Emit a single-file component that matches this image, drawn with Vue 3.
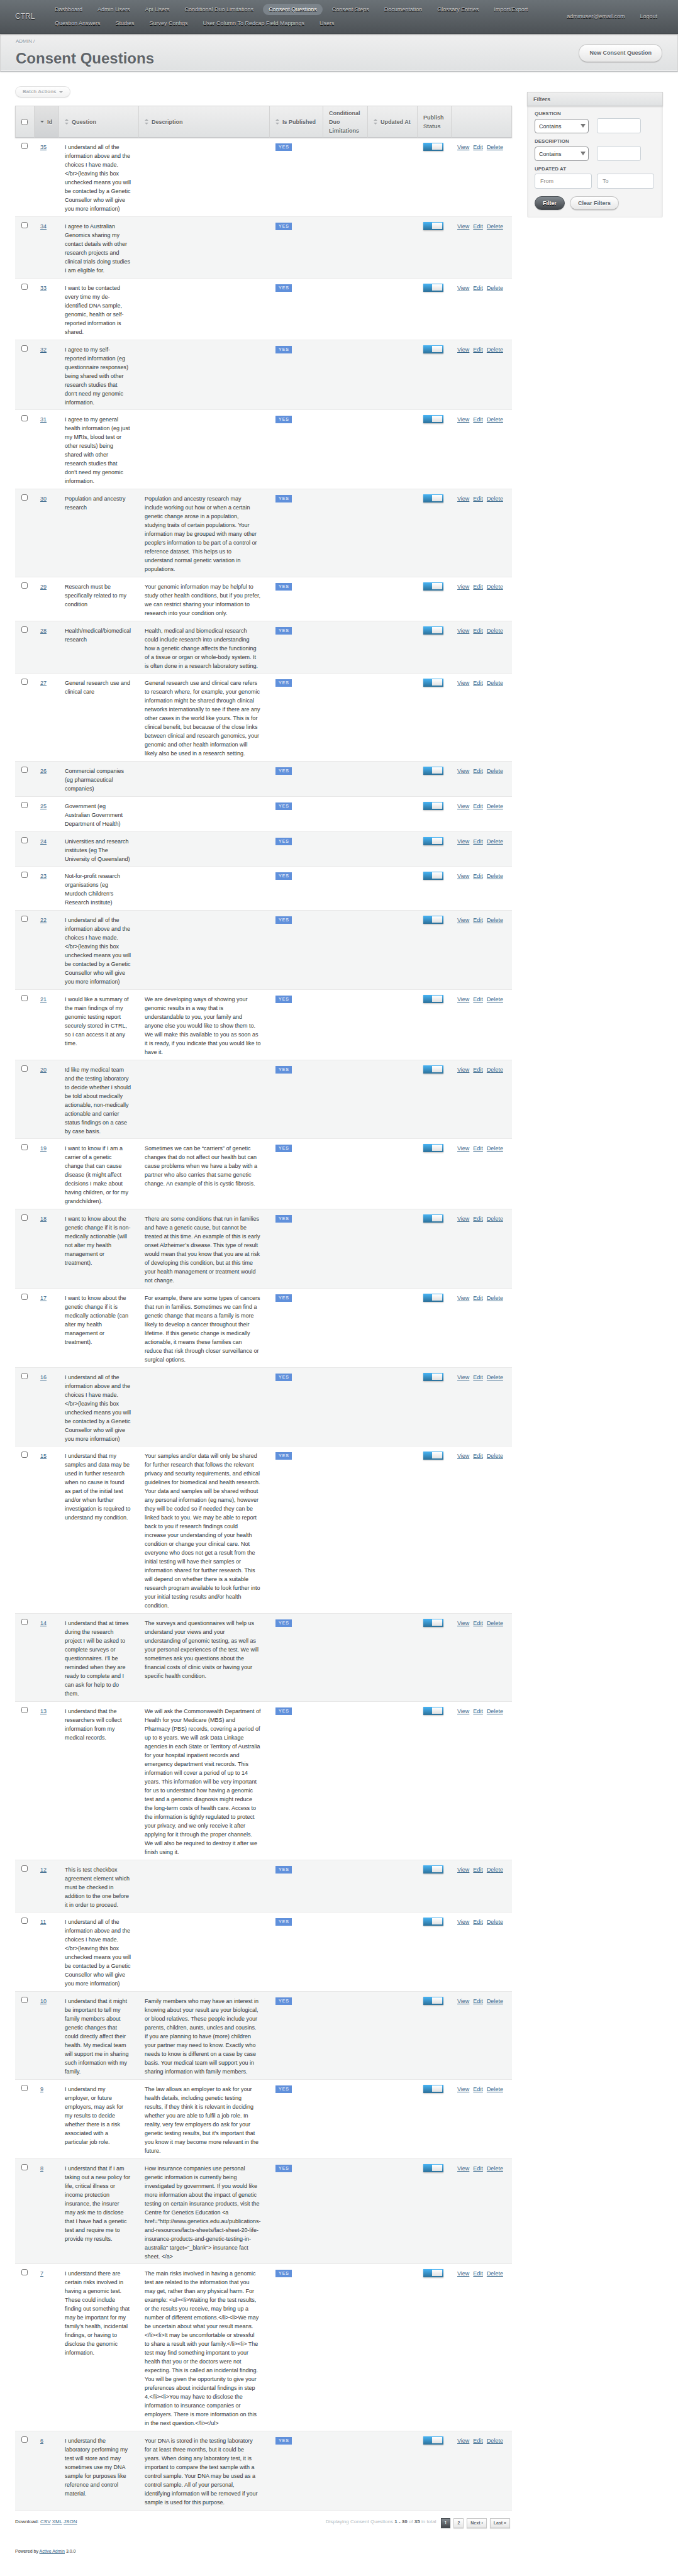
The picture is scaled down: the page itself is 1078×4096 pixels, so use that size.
<script setup>
import { ref } from 'vue'

const primaryLinks = [
  'Dashboard',
  'Admin Users',
  'Api Users',
  'Conditional Duo Limitations',
  'Consent Questions',
  'Consent Steps',
  'Documentation',
  'Glossary Entries',
  'Import/Export',
  'Question Answers',
  'Studies',
  'Survey Configs',
  'User Column To Redcap Field Mappings',
  'Users'
]
const current = 'Consent Questions'

const columns = [
  { key: 'id', label: 'Id', sort: 'desc' },
  { key: 'question', label: 'Question', sort: 'both' },
  { key: 'description', label: 'Description', sort: 'both' },
  { key: 'published', label: 'Is Published', sort: 'both' },
  { key: 'duo', label: 'Conditional Duo Limitations' },
  { key: 'updated', label: 'Updated At', sort: 'both' },
  { key: 'status', label: 'Publish Status' },
  { key: 'actions', label: '' }
]

const allChoices = `I understand all of the
information above and the
choices I have made.
</br>(leaving this box
unchecked means you will
be contacted by a Genetic
Counsellor who will give
you more information)`

const rows = ref(
  [
    { id: 35, question: allChoices },
    {
      id: 34,
      question: `I agree to Australian
Genomics sharing my
contact details with other
research projects and
clinical trials doing studies
I am eligible for.`
    },
    {
      id: 33,
      question: `I want to be contacted
every time my de-
identified DNA sample,
genomic, health or self-
reported information is
shared.`
    },
    {
      id: 32,
      question: `I agree to my self-
reported information (eg
questionnaire responses)
being shared with other
research studies that
don’t need my genomic
information.`
    },
    {
      id: 31,
      question: `I agree to my general
health information (eg just
my MRIs, blood test or
other results) being
shared with other
research studies that
don’t need my genomic
information.`
    },
    {
      id: 30,
      question: `Population and ancestry
research`,
      description: `Population and ancestry research may
include working out how or when a certain
genetic change arose in a population,
studying traits of certain populations. Your
information may be grouped with many other
people’s information to be part of a control or
reference dataset. This helps us to
understand normal genetic variation in
populations.`
    },
    {
      id: 29,
      question: `Research must be
specifically related to my
condition`,
      description: `Your genomic information may be helpful to
study other health conditions, but if you prefer,
we can restrict sharing your information to
research into your condition only.`
    },
    {
      id: 28,
      question: `Health/medical/biomedical
research`,
      description: `Health, medical and biomedical research
could include research into understanding
how a genetic change affects the functioning
of a tissue or organ or whole-body system. It
is often done in a research laboratory setting.`
    },
    {
      id: 27,
      question: `General research use and
clinical care`,
      description: `General research use and clinical care refers
to research where, for example, your genomic
information might be shared through clinical
networks internationally to see if there are any
other cases in the world like yours. This is for
clinical benefit, but because of the close links
between clinical and research genomics, your
genomic and other health information will
likely also be used in a research setting.`
    },
    {
      id: 26,
      question: `Commercial companies
(eg pharmaceutical
companies)`
    },
    {
      id: 25,
      question: `Government (eg
Australian Government
Department of Health)`
    },
    {
      id: 24,
      question: `Universities and research
institutes (eg The
University of Queensland)`
    },
    {
      id: 23,
      question: `Not-for-profit research
organisations (eg
Murdoch Children’s
Research Institute)`
    },
    { id: 22, question: allChoices },
    {
      id: 21,
      question: `I would like a summary of
the main findings of my
genomic testing report
securely stored in CTRL,
so I can access it at any
time.`,
      description: `We are developing ways of showing your
genomic results in a way that is
understandable to you, your family and
anyone else you would like to show them to.
We will make this available to you as soon as
it is ready, if you indicate that you would like to
have it.`
    },
    {
      id: 20,
      question: `Id like my medical team
and the testing laboratory
to decide whether I should
be told about medically
actionable, non-medically
actionable and carrier
status findings on a case
by case basis.`
    },
    {
      id: 19,
      question: `I want to know if I am a
carrier of a genetic
change that can cause
disease (it might affect
decisions I make about
having children, or for my
grandchildren).`,
      description: `Sometimes we can be “carriers” of genetic
changes that do not affect our health but can
cause problems when we have a baby with a
partner who also carries that same genetic
change. An example of this is cystic fibrosis.`
    },
    {
      id: 18,
      question: `I want to know about the
genetic change if it is non-
medically actionable (will
not alter my health
management or
treatment).`,
      description: `There are some conditions that run in families
and have a genetic cause, but cannot be
treated at this time. An example of this is early
onset Alzheimer’s disease. This type of result
would mean that you know that you are at risk
of developing this condition, but at this time
your health management or treatment would
not change.`
    },
    {
      id: 17,
      question: `I want to know about the
genetic change if it is
medically actionable (can
alter my health
management or
treatment).`,
      description: `For example, there are some types of cancers
that run in families. Sometimes we can find a
genetic change that means a family is more
likely to develop a cancer throughout their
lifetime. If this genetic change is medically
actionable, it means these families can
reduce that risk through closer surveillance or
surgical options.`
    },
    { id: 16, question: allChoices },
    {
      id: 15,
      question: `I understand that my
samples and data may be
used in further research
when no cause is found
as part of the initial test
and/or when further
investigation is required to
understand my condition.`,
      description: `Your samples and/or data will only be shared
for further research that follows the relevant
privacy and security requirements, and ethical
guidelines for biomedical and health research.
Your data and samples will be shared without
any personal information (eg name), however
they will be coded so if needed they can be
linked back to you. We may be able to report
back to you if research findings could
increase your understanding of your health
condition or change your clinical care. Not
everyone who does not get a result from the
initial testing will have their samples or
information shared for further research. This
will depend on whether there is a suitable
research program available to look further into
your initial testing results and/or health
condition.`
    },
    {
      id: 14,
      question: `I understand that at times
during the research
project I will be asked to
complete surveys or
questionnaires. I’ll be
reminded when they are
ready to complete and I
can ask for help to do
them.`,
      description: `The surveys and questionnaires will help us
understand your views and your
understanding of genomic testing, as well as
your personal experiences of the test. We will
sometimes ask you questions about the
financial costs of clinic visits or having your
specific health condition.`
    },
    {
      id: 13,
      question: `I understand that the
researchers will collect
information from my
medical records.`,
      description: `We will ask the Commonwealth Department of
Health for your Medicare (MBS) and
Pharmacy (PBS) records, covering a period of
up to 8 years. We will ask Data Linkage
agencies in each State or Territory of Australia
for your hospital inpatient records and
emergency department visit records. This
information will cover a period of up to 14
years. This information will be very important
for us to understand how having a genomic
test and a genomic diagnosis might reduce
the long-term costs of health care. Access to
the information is tightly regulated to protect
your privacy, and we only receive it after
applying for it through the proper channels.
We will also be required to destroy it after we
finish using it.`
    },
    {
      id: 12,
      question: `This is test checkbox
agreement element which
must be checked in
addition to the one before
it in order to proceed.`
    },
    { id: 11, question: allChoices },
    {
      id: 10,
      question: `I understand that it might
be important to tell my
family members about
genetic changes that
could directly affect their
health. My medical team
will support me in sharing
such information with my
family.`,
      description: `Family members who may have an interest in
knowing about your result are your biological,
or blood relatives. These people include your
parents, children, aunts, uncles and cousins.
If you are planning to have (more) children
your partner may need to know. Exactly who
needs to know is different on a case by case
basis. Your medical team will support you in
sharing information with family members.`
    },
    {
      id: 9,
      question: `I understand my
employer, or future
employers, may ask for
my results to decide
whether there is a risk
associated with a
particular job role.`,
      description: `The law allows an employer to ask for your
health details, including genetic testing
results, if they think it is relevant in deciding
whether you are able to fulfil a job role. In
reality, very few employers do ask for your
genetic testing results, but it's important that
you know it may become more relevant in the
future.`
    },
    {
      id: 8,
      question: `I understand that if I am
taking out a new policy for
life, critical illness or
income protection
insurance, the insurer
may ask me to disclose
that I have had a genetic
test and require me to
provide my results.`,
      description: `How insurance companies use personal
genetic information is currently being
investigated by government. If you would like
more information about the impact of genetic
testing on certain insurance products, visit the
Centre for Genetics Education <a
href="http://www.genetics.edu.au/publications-
and-resources/facts-sheets/fact-sheet-20-life-
insurance-products-and-genetic-testing-in-
australia" target="_blank"> insurance fact
sheet. </a>`
    },
    {
      id: 7,
      question: `I understand there are
certain risks involved in
having a genomic test.
These could include
finding out something that
may be important for my
family’s health, incidental
findings, or having to
disclose the genomic
information.`,
      description: `The main risks involved in having a genomic
test are related to the information that you
may get, rather than any physical harm. For
example: <ul><li>Waiting for the test results,
or the results you receive, may bring up a
number of different emotions.</li><li>We may
be uncertain about what your result means.
</li><li>It may be uncomfortable or stressful
to share a result with your family.</li><li> The
test may find something important to your
health that you or the doctors were not
expecting. This is called an incidental finding.
You will be given the opportunity to give your
preferences about incidental findings in step
4.</li><li>You may have to disclose the
information to insurance companies or
employers. There is more information on this
in the next question.</li></ul>`
    },
    {
      id: 6,
      question: `I understand the
laboratory performing my
test will store and may
sometimes use my DNA
sample for purposes like
reference and control
material.`,
      description: `Your DNA is stored in the testing laboratory
for at least three months, but it could be
years. When doing any laboratory test, it is
important to compare the test sample with a
control sample. Your DNA may be used as a
control sample. All of your personal,
identifying information will be removed if your
sample is used for this purpose.`
    }
  ].map((row) => ({ description: '', selected: false, published: true, ...row }))
)

const filters = ref({ question: '', description: '', from: '', to: '' })

function toggleAll(event) {
  rows.value.forEach((row) => {
    row.selected = event.target.checked
  })
}
</script>

<template>
  <div class="page">
    <header class="header">
      <h1 class="site-title">CTRL</h1>
      <nav class="tabs" aria-label="Main">
        <a v-for="link in primaryLinks" :key="link" href="#" :class="{ current: link === current }">{{ link }}</a>
      </nav>
      <nav class="tabs utility" aria-label="Account">
        <a href="#">adminuser@email.com</a>
        <a href="#">Logout</a>
      </nav>
    </header>

    <div class="title-bar">
      <div>
        <div class="breadcrumb"><a href="#">ADMIN</a> <span>/</span></div>
        <h2 class="page-title">Consent Questions</h2>
      </div>
      <button type="button" class="btn btn-new">New Consent Question</button>
    </div>

    <div class="content">
      <main class="main">
        <button type="button" class="btn btn-batch" disabled>
          Batch Actions
          <svg width="6" height="3" viewBox="0 0 6 3" aria-hidden="true"><path d="M0 0h6L3 3z" /></svg>
        </button>

        <table class="index">
          <colgroup>
            <col class="col-select" />
            <col v-for="c in columns" :key="c.key" :class="'col-' + c.key" />
          </colgroup>
          <thead>
            <tr>
              <th><input type="checkbox" class="tick" aria-label="Select all" @change="toggleAll" /></th>
              <th v-for="c in columns" :key="c.key" :class="{ sorted: c.sort === 'desc' }">
                <div class="th-inner">
                  <svg v-if="c.sort === 'both'" class="sort" width="6" height="9" viewBox="0 0 6 9" aria-hidden="true">
                    <path d="M0 3L3 0l3 3zM0 6h6L3 9z" />
                  </svg>
                  <svg v-else-if="c.sort" class="sort down" width="6" height="9" viewBox="0 0 6 9" aria-hidden="true">
                    <path d="M0 3h6L3 6z" />
                  </svg>
                  <span>{{ c.label }}</span>
                </div>
              </th>
            </tr>
          </thead>
          <tbody>
            <tr v-for="row in rows" :key="row.id">
              <td><input v-model="row.selected" type="checkbox" class="tick" :aria-label="'Select ' + row.id" /></td>
              <td><a href="#">{{ row.id }}</a></td>
              <td class="prose">{{ row.question }}</td>
              <td class="prose">{{ row.description }}</td>
              <td><span class="tag">Yes</span></td>
              <td></td>
              <td></td>
              <td><input v-model="row.published" type="checkbox" class="switch" :aria-label="'Publish ' + row.id" /></td>
              <td>
                <div class="actions"><a href="#">View</a><a href="#">Edit</a><a href="#">Delete</a></div>
              </td>
            </tr>
          </tbody>
        </table>

        <div class="index-footer">
          <div class="download">Download: <a href="#">CSV</a> <a href="#">XML</a> <a href="#">JSON</a></div>
          <div class="paging">
            <span class="summary">Displaying Consent Questions <b>1 - 30</b> of <b>35</b> in total</span>
            <nav class="pages" aria-label="Pagination">
              <a href="#" class="active" aria-current="page">1</a>
              <a href="#">2</a>
              <a href="#">Next ›</a>
              <a href="#">Last »</a>
            </nav>
          </div>
        </div>
      </main>

      <aside class="sidebar">
        <h3>Filters</h3>
        <form class="filters" @submit.prevent>
          <div class="field">
            <label for="f-question">QUESTION</label>
            <div class="controls">
              <span class="select">
                <select aria-label="Question condition">
                  <option>Contains</option>
                  <option>Equals</option>
                  <option>Starts with</option>
                  <option>Ends with</option>
                </select>
                <svg width="8" height="6" viewBox="0 0 8 6" aria-hidden="true"><path d="M0 0h8L4 6z" /></svg>
              </span>
              <input id="f-question" v-model="filters.question" type="text" class="short" />
            </div>
          </div>
          <div class="field">
            <label for="f-description">DESCRIPTION</label>
            <div class="controls">
              <span class="select">
                <select aria-label="Description condition">
                  <option>Contains</option>
                  <option>Equals</option>
                  <option>Starts with</option>
                  <option>Ends with</option>
                </select>
                <svg width="8" height="6" viewBox="0 0 8 6" aria-hidden="true"><path d="M0 0h8L4 6z" /></svg>
              </span>
              <input id="f-description" v-model="filters.description" type="text" class="short" />
            </div>
          </div>
          <div class="field">
            <label for="f-from">UPDATED AT</label>
            <div class="controls">
              <input id="f-from" v-model="filters.from" type="text" placeholder="From" />
              <input v-model="filters.to" type="text" placeholder="To" aria-label="Updated at, to" />
            </div>
          </div>
          <div class="buttons">
            <button type="submit" class="btn btn-dark">Filter</button>
            <button type="reset" class="btn btn-clear">Clear Filters</button>
          </div>
        </form>
      </aside>
    </div>

    <footer class="footer">Powered by <a href="#">Active Admin</a> 3.0.0</footer>
  </div>
</template>

<style>
body {
  margin: 0;
  background: #fff;
}
</style>

<style scoped>
.page {
  font: 9px/14px "Liberation Sans", Arial, sans-serif;
  color: #323537;
}
.page *,
.page *::before {
  box-sizing: border-box;
}
a {
  color: #38678b;
}
button,
input,
select {
  font: inherit;
  margin: 0;
}
h1,
h2,
h3 {
  margin: 0;
}

.header {
  display: flex;
  align-items: center;
  min-height: 53px;
  padding: 6px 24px 7px;
  background: linear-gradient(180deg, #6a7176, #4d5256);
  border-bottom: 1px solid #44494c;
  box-shadow: 0 1px 2px rgba(0, 0, 0, 0.37);
  text-shadow: 0 1px 0 #000;
  position: relative;
}
.site-title {
  width: 54px;
  flex: none;
  font-size: 12px;
  font-weight: normal;
  color: #cdcdcd;
}
.tabs {
  display: flex;
  flex-wrap: wrap;
  gap: 4px 6px;
  max-width: 800px;
}
.tabs a {
  padding: 2px 9px;
  line-height: 14px;
  border-radius: 9px;
  color: #cdcdcd;
  text-decoration: none;
}
.tabs a.current {
  background: #7b838a;
  color: #fff;
}
.utility {
  flex: none;
  margin-left: auto;
}

.title-bar {
  display: flex;
  align-items: center;
  justify-content: space-between;
  height: 60px;
  padding: 0 24px;
  background: linear-gradient(180deg, #efefef, #dfe1e2);
  border: 1px solid #d4d4d4;
  border-top-color: #e6e6e6;
  border-bottom-color: #b9bbbd;
  box-shadow: 0 1px 2px rgba(0, 0, 0, 0.12), inset 0 -1px 0 #f4f4f4;
  text-shadow: 0 1px 0 #fff;
}
.breadcrumb {
  font-size: 8px;
  color: #8a949e;
}
.breadcrumb a {
  color: #8a949e;
  text-decoration: none;
}
.page-title {
  margin-top: 4px;
  font-size: 24px;
  line-height: 32px;
  color: #5e6469;
}

.btn {
  padding: 0 15px;
  border: 1px solid #c7c7c7;
  border-bottom-color: #b0b0b0;
  border-radius: 14px;
  background: linear-gradient(180deg, #fff, #e7e7e7);
  box-shadow: 0 1px 1px rgba(0, 0, 0, 0.12);
  color: #5e6469;
  font-weight: bold;
  text-shadow: 0 1px 0 #fff;
  white-space: nowrap;
}
.btn-new {
  height: 29px;
  padding: 0 16px;
}
.btn-batch {
  display: flex;
  align-items: center;
  gap: 4px;
  height: 18px;
  padding: 0 11px;
  font-size: 8px;
  opacity: 0.5;
}
.btn-batch svg {
  fill: #5e6469;
}
.btn-dark {
  background: linear-gradient(180deg, #838a90, #414549);
  border-color: #484e53;
  color: #fff;
  text-shadow: 0 1px 0 #000;
}

.content {
  display: flex;
  align-items: flex-start;
  gap: 24px;
  padding: 23px 24px 0;
}
.main {
  flex: 1;
  min-width: 0;
}

.index {
  width: 100%;
  margin-top: 13px;
  table-layout: fixed;
  border-collapse: separate;
  border-spacing: 0;
}
.col-select { width: 30px; }
.col-id { width: 39px; }
.col-question { width: 127px; }
.col-published { width: 85px; }
.col-duo { width: 71px; }
.col-updated { width: 79px; }
.col-status { width: 54px; }
.col-actions { width: 97px; }

thead tr {
  box-shadow: 0 1px 2px rgba(0, 0, 0, 0.15);
}
th {
  height: 51px;
  padding: 3px 9px;
  text-align: left;
  color: #5e6469;
  text-shadow: 0 1px 0 #fff;
  background: linear-gradient(180deg, #efefef, #dfe1e2);
  border: solid #d4d4d4;
  border-width: 1px 0 1px 1px;
  border-bottom-color: #c4c6c8;
}
th:last-child {
  border-right-width: 1px;
}
th.sorted {
  background: linear-gradient(180deg, #e2e2e2, #d0d2d4);
}
.th-inner {
  display: flex;
  align-items: center;
  gap: 5px;
}
.sort {
  flex: none;
  fill: #aeb1b4;
}
.sort.down {
  fill: #5e6469;
}
td {
  padding: 8px 8px 5px 10px;
  vertical-align: top;
  border-bottom: 1px solid #e8e8e8;
}
tr:nth-child(4n) td {
  padding-bottom: 4px;
}
tbody tr:nth-child(even) td {
  background: #f4f5f5;
}
.prose {
  padding-right: 6px;
  overflow-wrap: break-word;
  white-space: pre-line;
}
.tick {
  display: block;
  width: 10px;
  height: 10px;
}
.tag {
  display: block;
  width: max-content;
  margin-top: 1px;
  padding: 0 4px 0 5px;
  background: #6090db;
  color: #fff;
  font-size: 7px;
  line-height: 12px;
  letter-spacing: 1px;
  text-transform: uppercase;
}
.switch {
  appearance: none;
  display: block;
  position: relative;
  width: 32px;
  height: 13px;
  background: linear-gradient(180deg, #aaa, #777);
  box-shadow: 0 1px 2px rgba(0, 0, 0, 0.25);
}
.switch:checked {
  background: linear-gradient(180deg, #47b4f5, #2c7099);
}
.switch::before {
  content: "";
  position: absolute;
  top: 1px;
  left: 2px;
  width: 16px;
  height: 10px;
  background: linear-gradient(180deg, #fff, #e2e2e2);
}
.switch:checked::before {
  left: 14px;
}
.actions {
  display: flex;
  gap: 6px;
}

.index-footer {
  display: flex;
  justify-content: space-between;
  align-items: flex-start;
  padding: 11px 3px 0 0;
  font-size: 8px;
}
.paging {
  display: flex;
  gap: 7px;
}
.summary {
  color: #b3bcc1;
}
.summary b {
  color: #5e6469;
}
.pages {
  display: flex;
  gap: 5px;
  margin-top: 1px;
}
.pages a {
  padding: 0 5px;
  border: 1px solid #c7c7c7;
  background: linear-gradient(180deg, #fff, #e7e7e7);
  box-shadow: 0 1px 1px rgba(0, 0, 0, 0.12);
  color: #5e6469;
  font-size: 7px;
  font-weight: bold;
  text-decoration: none;
  text-shadow: 0 1px 0 #fff;
}
.pages .active {
  background: linear-gradient(180deg, #838a90, #414549);
  border-color: #484e53;
  color: #fff;
  text-shadow: 0 1px 0 #000;
}

.sidebar {
  flex: none;
  width: 216px;
  margin-top: 9px;
  background: #f4f4f4;
  border-radius: 3px;
  box-shadow: inset 0 1px 4px #ddd;
}
.sidebar h3 {
  height: 23px;
  padding: 4px 9px;
  font-size: 9px;
  line-height: 14px;
  color: #5e6469;
  text-shadow: 0 1px 0 #fff;
  background: linear-gradient(180deg, #efefef, #dfe1e2);
  border: 1px solid #d4d4d4;
  border-bottom-color: #c4c6c8;
  box-shadow: 0 1px 2px rgba(0, 0, 0, 0.12);
}
.filters {
  padding: 5px 14px 12px 12px;
}
.field {
  margin-bottom: 6px;
}
.field label {
  display: block;
  font-size: 8px;
  font-weight: bold;
  color: #5e6469;
}
.controls {
  display: flex;
  gap: 8px;
  height: 24px;
}
.controls input {
  flex: 1;
  min-width: 0;
  height: 24px;
  padding: 0 8px;
  border: 1px solid #c9d0d6;
  border-radius: 3px;
  background: #fff;
}
.controls input::placeholder {
  color: #8a8a8a;
}
.controls .short {
  flex: none;
  width: 70px;
}
.select {
  position: relative;
  width: 86px;
  height: 23px;
  margin: 1px 5px 0 0;
}
.select select {
  appearance: none;
  width: 100%;
  height: 100%;
  padding: 0 6px;
  border: 1px solid #8f9194;
  border-radius: 4px;
  background: #fff;
  color: #323537;
}
.select svg {
  position: absolute;
  top: 8px;
  right: 5px;
  fill: #777;
  pointer-events: none;
}
.buttons {
  display: flex;
  gap: 8px;
  margin-top: 12px;
}
.buttons .btn {
  height: 22px;
  padding: 0 12px;
}

.footer {
  padding: 30px 24px 36px;
  font-size: 7px;
}
</style>
